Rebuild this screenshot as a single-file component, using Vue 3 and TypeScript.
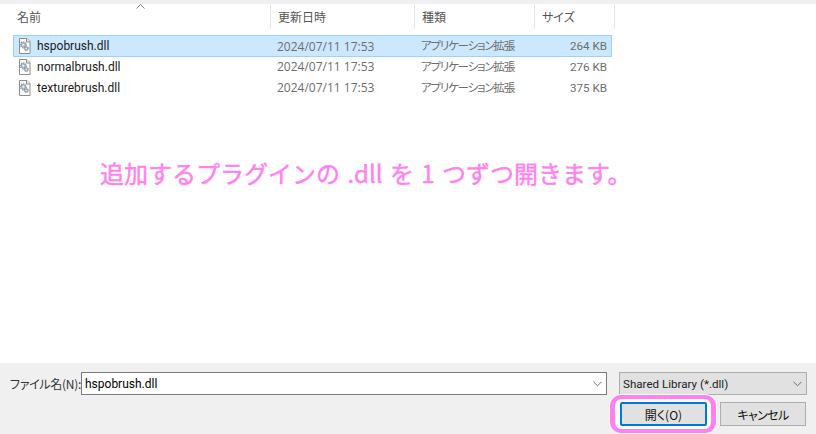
<script setup lang="ts">
interface DllFile {
  name: string
  date: string
  kind: string
  size: string
  selected?: boolean
}

const files: DllFile[] = [
  { name: 'hspobrush.dll', date: '2024/07/11 17:53', kind: 'アプリケーション拡張', size: '264 KB', selected: true },
  { name: 'normalbrush.dll', date: '2024/07/11 17:53', kind: 'アプリケーション拡張', size: '276 KB' },
  { name: 'texturebrush.dll', date: '2024/07/11 17:53', kind: 'アプリケーション拡張', size: '375 KB' }
]
</script>

<template>
  <div class="dialog">
    <div class="list">
      <div class="head">
        <div class="col name">名前
          <svg class="sort" width="9" height="5" viewBox="0 0 9 5"><path d="M.5 4.5 4.5.5l4 4" fill="none" stroke="#7f7f7f" /></svg>
        </div>
        <div class="col date">更新日時</div>
        <div class="col kind">種類</div>
        <div class="col size">サイズ</div>
      </div>
      <div class="rows">
        <div v-for="f in files" :key="f.name" class="row" :class="{ selected: f.selected }">
          <div class="cell c-name">
            <svg class="icon" width="16" height="16" viewBox="0 0 16 16">
              <path d="M2.5.5h7.5l3 3v12h-10.500z" fill="#fff" stroke="#8c8c8c" />
              <path d="M9.500 .5v3.500h3.500" fill="#f0f0f0" stroke="#8c8c8c" />
              <circle cx="6.300" cy="6.800" r="2.900" fill="none" stroke="#8a929a" stroke-width="1.200" stroke-dasharray="1.200 1" />
              <circle cx="6.300" cy="6.800" r="2.200" fill="#c3ccd4" stroke="#7d8790" stroke-width=".7" />
              <circle cx="6.300" cy="6.800" r=".8" fill="#fff" />
              <circle cx="9.200" cy="10.400" r="2.300" fill="none" stroke="#7f93a5" stroke-width="1" stroke-dasharray="1 .9" />
              <circle cx="9.200" cy="10.400" r="1.700" fill="#a9bccb" stroke="#74889a" stroke-width=".6" />
              <circle cx="9.200" cy="10.400" r=".6" fill="#fff" />
            </svg>
            <span>{{ f.name }}</span>
          </div>
          <div class="cell c-date">{{ f.date }}</div>
          <div class="cell c-kind">{{ f.kind }}</div>
          <div class="cell c-size">{{ f.size }}</div>
        </div>
      </div>
      <p class="note">追加するプラグインの .dll を 1 つずつ開きます。</p>
    </div>

    <div class="footer">
      <div class="line">
        <label class="label">ファイル名(N):</label>
        <div class="combo">
          <span>hspobrush.dll</span>
          <svg width="9" height="6" viewBox="0 0 10 6"><path d="M.5.5 5 5 9.5.5" fill="none" stroke="#606060" /></svg>
        </div>
        <div class="filter">
          <span>Shared Library (*.dll)</span>
          <svg width="9" height="6" viewBox="0 0 10 6"><path d="M.5.5 5 5 9.5.5" fill="none" stroke="#606060" /></svg>
        </div>
      </div>
      <div class="buttons">
        <div class="ring"><button class="btn primary">開く(O)</button></div>
        <button class="btn cancel">キャンセル</button>
      </div>
    </div>
  </div>
</template>

<style scoped>
.dialog {
  width: 816px;
  height: 434px;
  display: flex;
  flex-direction: column;
  background: #fff;
  overflow: hidden;
  font-family: Roboto, "Noto Sans CJK JP", sans-serif;
  font-size: 12px;
  color: #000;
}

.list {
  flex: 1;
  border-top: 4px solid #f0f0f2;
  display: flex;
  flex-direction: column;
}

.head {
  display: flex;
  height: 25px;
  font-family: "Noto Sans CJK JP", sans-serif;
  font-size: 12px;
  font-feature-settings: "palt";
}

.col {
  box-sizing: border-box;
  border-right: 1px solid #e5e5e5;
  padding-left: 7px;
  line-height: 25px;
  color: #555;
}

.col.name {
  width: 271px;
  padding-left: 17px;
  position: relative;
}

.sort {
  position: absolute;
  left: 136px;
  top: 0;
}

.col.date { width: 144px; }
.col.kind { width: 120px; }
.col.size { width: 80px; }

.rows {
  margin: 6px 0 0 13px;
  width: 599px;
}

.row {
  box-sizing: border-box;
  display: flex;
  align-items: center;
  height: 21px;
  border: 1px solid transparent;
  color: #6d6d6d;
}

.row.selected {
  background: #cce8ff;
  border-color: #99d1ff;
  height: 22px;
  margin-bottom: -1px;
}

.cell {
  white-space: nowrap;
}

.c-name {
  width: 263px;
  display: flex;
  align-items: center;
  color: #1a1a1a;
}

.icon {
  margin: 0 4px 0 3px;
}

.c-date { width: 144px; font-family: "Open Sans", sans-serif; }
.c-kind {
  width: 118px;
  margin-bottom: 2px;
  font-family: "Noto Sans CJK JP", sans-serif;
  font-size: 11.5px;
  letter-spacing: -1.2px;
  font-feature-settings: "palt";
}
.c-size { width: 68px; text-align: right; font-size: 11.6px; }

.note {
  margin: 60px 0 0 100px;
  font-family: "Noto Sans CJK JP", sans-serif;
  font-size: 24px;
  line-height: 30px;
  font-weight: 400;
  word-spacing: 2px;
  color: #ff80ee;
  -webkit-text-stroke: 0.4px #ff80ee;
  white-space: nowrap;
}

.footer {
  height: 71px;
  background: #f0f0f0;
  box-sizing: border-box;
  padding: 9px 9px 0 10px;
}

.line {
  display: flex;
  align-items: center;
  height: 23px;
}

.label {
  width: 71px;
  font-family: "Noto Sans CJK JP", sans-serif;
  font-size: 12px;
  letter-spacing: -0.3px;
  font-feature-settings: "palt";
  color: #333;
  white-space: nowrap;
}

.combo,
.filter {
  box-sizing: border-box;
  height: 23px;
  display: flex;
  align-items: center;
  justify-content: space-between;
}

.combo {
  width: 526px;
  background: #fff;
  border: 1px solid #7a7a7a;
  padding: 0 4px 0 3px;
}

.filter {
  width: 188px;
  margin-left: 12px;
  background: #e1e1e1;
  border: 1px solid #adadad;
  padding: 0 4px 0 3px;
  font-size: 11.6px;
  color: #222;
}

.buttons {
  display: flex;
  justify-content: flex-end;
  align-items: flex-start;
  gap: 4px;
  margin-right: 1px;
}

.ring {
  box-sizing: border-box;
  width: 106px;
  height: 38px;
  display: flex;
  align-items: center;
  padding-left: 5px;
  border: 4px solid #ff80ee;
  border-width: 4px 5px;
  border-radius: 11px;
  background: #fff;
  box-shadow: 0 0 0 1px #fff;
}

.btn {
  box-sizing: border-box;
  width: 86px;
  height: 24px;
  padding: 0;
  background: #e1e1e1;
  border: 1px solid #adadad;
  font-family: "Noto Sans CJK JP", sans-serif;
  font-size: 12px;
  font-feature-settings: "palt";
  color: #111;
}

.btn.primary {
  width: 87px;
  flex-shrink: 0;
  border: 2px solid #0078d7;
  border-radius: 2px;
}

.btn.cancel {
  margin-top: 7px;
  letter-spacing: -0.6px;
}
</style>
